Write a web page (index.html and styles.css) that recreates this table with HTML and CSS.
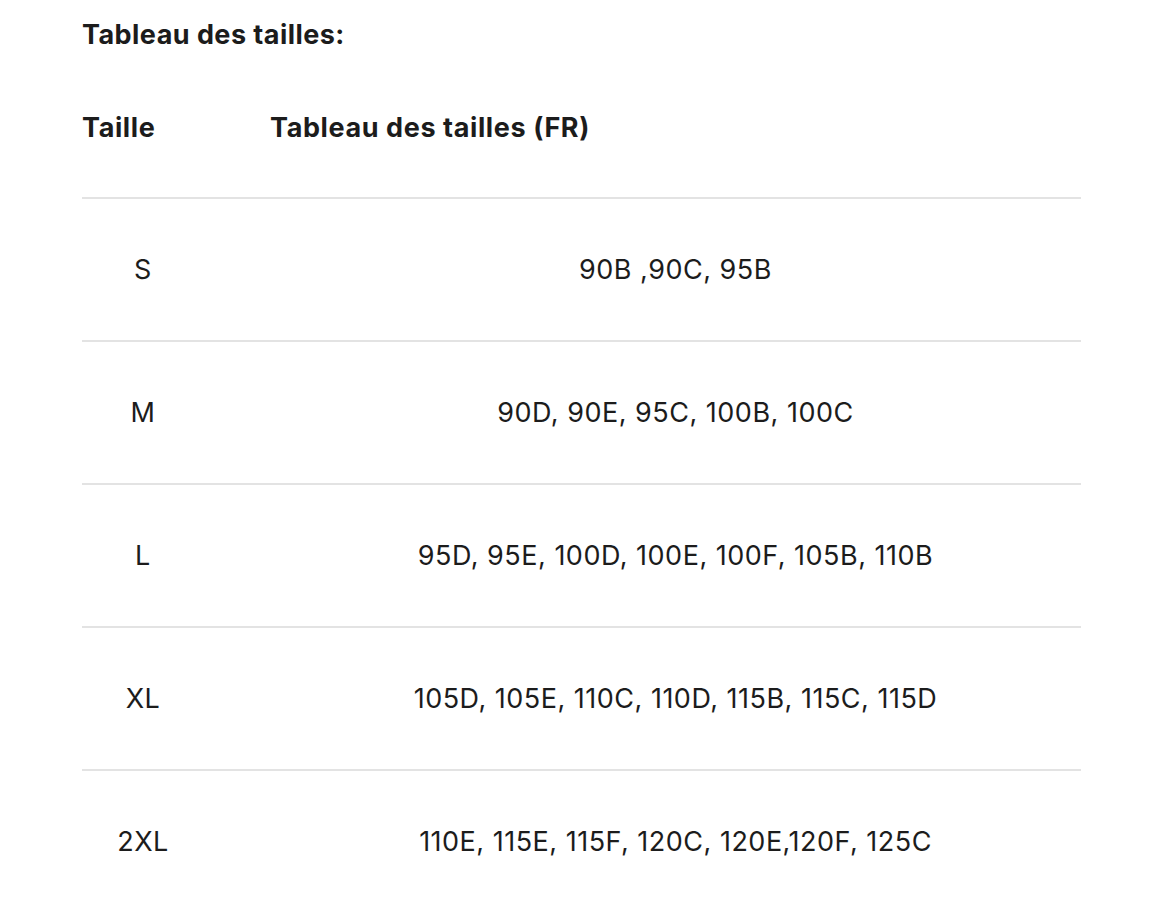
FILE: index.html
```html
<!DOCTYPE html>
<html lang="fr">
<head>
<meta charset="utf-8">
<title>Tableau des tailles</title>
<link rel="stylesheet" href="styles.css">
</head>
<body>
<main class="page">
  <h2 class="title">Tableau des tailles:</h2>
  <table class="sizes">
    <thead>
      <tr>
        <th class="col-size">Taille</th>
        <th class="col-fr">Tableau des tailles (FR)</th>
      </tr>
    </thead>
    <tbody>
      <tr><td class="col-size">S</td><td class="col-fr">90B ,90C, 95B</td></tr>
      <tr><td class="col-size">M</td><td class="col-fr">90D, 90E, 95C, 100B, 100C</td></tr>
      <tr><td class="col-size">L</td><td class="col-fr">95D, 95E, 100D, 100E, 100F, 105B, 110B</td></tr>
      <tr><td class="col-size">XL</td><td class="col-fr">105D, 105E, 110C, 110D, 115B, 115C, 115D</td></tr>
      <tr><td class="col-size">2XL</td><td class="col-fr">110E, 115E, 115F, 120C, 120E,120F, 125C</td></tr>
    </tbody>
  </table>
</main>
</body>
</html>
```

FILE: styles.css
```css
html, body {
  margin: 0;
  padding: 0;
  background: #ffffff;
}
body {
  font-family: Inter, "Noto Sans", "Liberation Sans", sans-serif;
  color: #1c1c1c;
}
.page {
  padding: 0 75px 0 82px;
}
.title {
  margin: 0;
  padding-top: 20px;
  font-size: 27px;
  line-height: 30px;
  font-weight: 700;
  letter-spacing: 0.45px;
}
.sizes {
  width: 999px;
  border-collapse: collapse;
  margin-top: 63px;
  font-size: 27px;
  letter-spacing: 0.5px;
}
.sizes th {
  text-align: left;
  font-weight: 700;
  padding: 0 0 54px 0;
  line-height: 30px;
  vertical-align: top;
  letter-spacing: 0.6px;
}
.sizes td {
  height: 141px;
  padding: 0;
  text-align: center;
  vertical-align: middle;
  border-top: 2px solid #e3e3e3;
  line-height: 30px;
}
.sizes .col-size {
  width: 188px;
}
.sizes td.col-size {
  padding-right: 66px;
  width: 122px;
}
```
